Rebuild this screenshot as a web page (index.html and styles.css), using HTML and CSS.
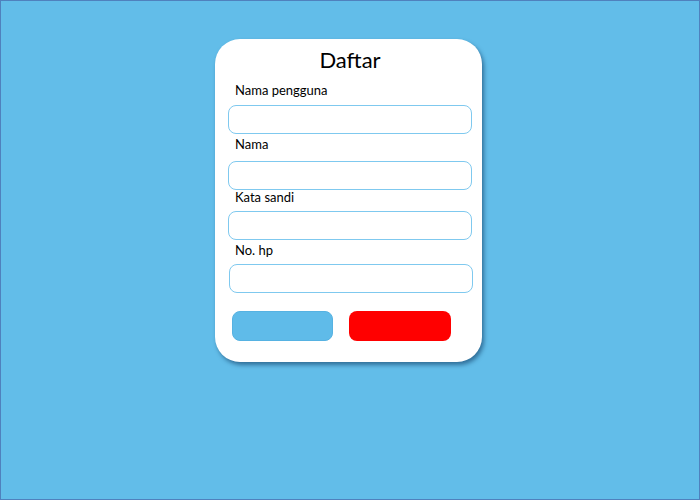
FILE: index.html
```html
<!DOCTYPE html>
<html lang="id">
<head>
<meta charset="utf-8">
<title>Daftar</title>
<link rel="stylesheet" href="styles.css">
</head>
<body>
<div class="page">
  <form class="card">
    <h1 class="title">Daftar</h1>
    <div class="field field-first">
      <label class="label">Nama pengguna</label>
      <input class="input" type="text">
    </div>
    <div class="field field-second">
      <label class="label">Nama</label>
      <input class="input" type="text">
    </div>
    <div class="field field-third">
      <label class="label">Kata sandi</label>
      <input class="input" type="password">
    </div>
    <div class="field field-fourth">
      <label class="label">No. hp</label>
      <input class="input input-shift" type="text">
    </div>
    <div class="actions">
      <button type="button" class="btn btn-blue"></button>
      <button type="button" class="btn btn-red"></button>
    </div>
  </form>
</div>
</body>
</html>
```

FILE: styles.css
```css
* { box-sizing: border-box; }
html, body { margin: 0; padding: 0; }
body {
  width: 700px;
  height: 500px;
  overflow: hidden;
  font-family: "Lato", "Open Sans", sans-serif;
}
.page {
  width: 700px;
  height: 500px;
  background: #62bde9;
  border: 1px solid #4f81bd;
  padding: 38px 0 0 214px;
}
.card {
  width: 267px;
  height: 323px;
  background: #ffffff;
  border-radius: 25px;
  box-shadow: 2px 3px 4px rgba(10, 50, 90, 0.55);
  padding: 8px 10px 0 13px;
  display: flex;
  flex-direction: column;
}
.title {
  margin: 0;
  font-size: 22px;
  line-height: 26px;
  font-weight: 400;
  text-align: center;
  color: #000;
}
.field {
  display: flex;
  flex-direction: column;
  gap: 7px;
}
.field-first { margin-top: 9px; }
.field-second { margin-top: 2px; gap: 9px; }
.field-third { margin-top: -1px; gap: 6px; }
.field-fourth { margin-top: 2px; gap: 6px; }
.label {
  font-size: 13px;
  line-height: 16px;
  color: #000;
  padding-left: 7px;
}
.input {
  display: block;
  width: 244px;
  height: 29px;
  margin: 0;
  border: 1.5px solid #7fc9ef;
  border-radius: 8px;
  background: #fff;
  outline: none;
}
.input-shift { margin-left: 1px; }
.actions {
  display: flex;
  gap: 16px;
  margin-top: 18px;
  padding-left: 4px;
}
.btn {
  height: 30px;
  border-radius: 8px;
  padding: 0;
  margin: 0;
}
.btn-blue {
  width: 101px;
  background: #5fbbe9;
  border: 1px solid #56b2e2;
}
.btn-red {
  width: 102px;
  background: #ff0000;
  border: none;
}
```
